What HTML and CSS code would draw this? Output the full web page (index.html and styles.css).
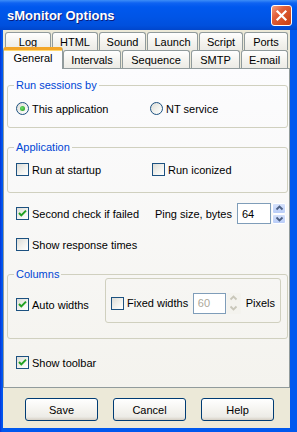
FILE: index.html
```html
<!DOCTYPE html>
<html>
<head>
  <title>sMonitor Options</title>
  <link rel="stylesheet" href="styles.css">
</head>
<body>
<div class="window">
  <div class="titlebar">
    <span class="title">sMonitor Options</span>
    <span class="close">
      <svg width="13" height="13" viewBox="0 0 13 13"><path d="M2.5 2.5 L10.5 10.5 M10.5 2.5 L2.5 10.5" stroke="#fff" stroke-width="2.2" stroke-linecap="square"/></svg>
    </span>
  </div>

  <div class="client">
    <div class="tabs">
      <div class="tabrow back">
        <span class="tab t-log">Log</span>
        <span class="tab t-html">HTML</span>
        <span class="tab t-sound">Sound</span>
        <span class="tab t-launch">Launch</span>
        <span class="tab t-script">Script</span>
        <span class="tab t-ports">Ports</span>
      </div>
      <div class="tabrow front">
        <span class="tab sel t-general">General</span>
        <span class="tab t-intervals">Intervals</span>
        <span class="tab t-sequence">Sequence</span>
        <span class="tab t-smtp">SMTP</span>
        <span class="tab t-email">E-mail</span>
      </div>
    </div>

    <div class="page">
      <fieldset class="group g-run">
        <legend>Run sessions by</legend>
        <div class="row">
          <label class="opt first-run"><span class="radio on"></span>This application</label>
          <label class="opt"><span class="radio"></span>NT service</label>
        </div>
      </fieldset>

      <fieldset class="group g-app">
        <legend>Application</legend>
        <div class="row">
          <label class="opt first-app"><span class="check"></span>Run at startup</label>
          <label class="opt"><span class="check"></span>Run iconized</label>
        </div>
      </fieldset>

      <div class="row ping-row">
        <label class="opt"><span class="check on"><svg width="11" height="11" viewBox="0 0 11 11"><path d="M2 5 L4.3 7.4 L9 2.6" fill="none" stroke="#21A121" stroke-width="2"/></svg></span>Second check if failed</label>
        <span class="ping-label">Ping size, bytes</span>
        <span class="field">64</span>
        <span class="spin">
          <span class="up"><svg width="9" height="6" viewBox="0 0 9 6"><path d="M1.5 4.5 L4.5 1.5 L7.5 4.5" fill="none" stroke="#4D6185" stroke-width="1.8"/></svg></span>
          <span class="down"><svg width="9" height="6" viewBox="0 0 9 6"><path d="M1.5 1.5 L4.5 4.5 L7.5 1.5" fill="none" stroke="#4D6185" stroke-width="1.8"/></svg></span>
        </span>
      </div>

      <label class="opt single resp"><span class="check"></span>Show response times</label>

      <fieldset class="group g-cols">
        <legend>Columns</legend>
        <div class="cols-row">
          <label class="opt auto"><span class="check on"><svg width="11" height="11" viewBox="0 0 11 11"><path d="M2 5 L4.3 7.4 L9 2.6" fill="none" stroke="#21A121" stroke-width="2"/></svg></span>Auto widths</label>
          <div class="subbox">
            <label class="opt fixed"><span class="check"></span>Fixed widths</label>
            <span class="field off">60</span>
            <span class="spin off">
              <span class="up"><svg width="9" height="6" viewBox="0 0 9 6"><path d="M1.5 4.5 L4.5 1.5 L7.5 4.5" fill="none" stroke="#C9C7BA" stroke-width="1.8"/></svg></span>
              <span class="down"><svg width="9" height="6" viewBox="0 0 9 6"><path d="M1.5 1.5 L4.5 4.5 L7.5 1.5" fill="none" stroke="#C9C7BA" stroke-width="1.8"/></svg></span>
            </span>
            <span class="pixels">Pixels</span>
          </div>
        </div>
      </fieldset>

      <label class="opt single toolbar"><span class="check on"><svg width="11" height="11" viewBox="0 0 11 11"><path d="M2 5 L4.3 7.4 L9 2.6" fill="none" stroke="#21A121" stroke-width="2"/></svg></span>Show toolbar</label>
    </div>

    <div class="buttons">
      <button class="btn">Save</button>
      <button class="btn">Cancel</button>
      <button class="btn">Help</button>
    </div>
  </div>
</div>
</body>
</html>
```

FILE: styles.css
```css
* { box-sizing: border-box; }
html, body { margin: 0; padding: 0; }
body { width: 297px; height: 432px; overflow: hidden;
       font: 11px "Liberation Sans", Arial, sans-serif; color: #000; background: #0055E5; }

.window { width: 297px; height: 432px; display: flex; flex-direction: column;
          background: linear-gradient(90deg, #0831D9 0, #0058EE 2px, #0058EE 100%);
          padding: 0 7px 4px 3px; }

/* title bar */
.titlebar { height: 30px; margin: 0 -7px 0 -3px; padding: 0 5px 0 7px;
            display: flex; align-items: center; justify-content: space-between;
            background: linear-gradient(#3D8EF7 0, #0F63F2 3px, #0058EE 7px, #0055E7 55%, #0050DD 85%, #0046CC 100%); }
.title { color: #fff; font-weight: bold; font-size: 13px; text-shadow: 1px 1px #0A1C7A; padding-top: 1px; }
.close { width: 21px; height: 21px; border: 1px solid #fff; border-radius: 3px; margin-top: 1px;
         display: flex; align-items: center; justify-content: center;
         background: linear-gradient(135deg, #F2A183 0, #E2603B 35%, #D04A1E 75%, #C53D15 100%); }
.close svg { display: block; }

/* client area */
.client { flex: 1; display: flex; flex-direction: column; background: #ECE9D8; }

.tabs { padding-top: 2px; height: 38px; }
.tabrow { display: flex; height: 18px; padding-left: 2px; gap: 1px; }
.tab { height: 18px; border: 1px solid #919B9C; border-radius: 3px 3px 0 0;
       background: linear-gradient(#FFFFFF, #F3F2ED 60%, #ECEBE6);
       display: flex; align-items: center; justify-content: center; padding-top: 1px; }
.back .tab { border-bottom: none; height: 18px; }
.front { align-items: flex-end; position: relative; z-index: 2; }
.front .tab { border-bottom: none; }
.tab.sel { height: 22px; margin: 0 -1px -1px -2px; background: #FCFCFE;
           border-top: 3px solid #F3A628; padding-top: 0; padding-bottom: 3px;
           box-shadow: inset 0 1px #FFD770; }

.t-log { width: 46px; }
.t-html { width: 46px; }
.t-sound { width: 47px; }
.t-launch { width: 51px; }
.t-script { width: 44px; }
.t-ports { width: 44px; }
.t-general { width: 60px; }
.t-intervals { width: 58px; }
.t-sequence { width: 68px; }
.t-smtp { width: 49px; }
.t-email { width: 47px; }

/* tab page */
.page { height: 320px; border: 1px solid #919B9C; position: relative; z-index: 1;
        background: linear-gradient(#FCFCFE, #F4F3EE);
        padding: 0 1px 0 3px; display: flex; flex-direction: column; }

.group { margin: 0; padding: 0 0 0 8px; border: 1px solid #D0D0BF; border-radius: 3px; min-width: 0; }
.group legend { padding: 0 2px; margin-left: -2px; color: #0046D5; line-height: 13px; }

.g-run { margin-top: 10px; padding-top: 10px; padding-bottom: 12px; }
.g-app { margin-top: 13px; padding-top: 9px; padding-bottom: 16px; }
.g-cols { margin-top: 17px; padding-bottom: 15px; }

.row { display: flex; align-items: center; }
.opt { display: flex; align-items: center; height: 13px; white-space: nowrap; }
.first-run { width: 134px; }
.first-app { width: 136px; }

.check { width: 13px; height: 13px; border: 1px solid #1C5180; margin-right: 3px; flex: none;
         background: linear-gradient(135deg, #DCDCD7, #F4F4F0 60%, #FFFFFF);
         display: flex; align-items: center; justify-content: center; }
.check svg { display: block; }
.radio { width: 13px; height: 13px; border: 1px solid #1C5180; border-radius: 50%; margin-right: 3px; flex: none;
         background: linear-gradient(135deg, #DCDCD7, #F4F4F0 60%, #FFFFFF);
         display: flex; align-items: center; justify-content: center; }
.radio.on::after { content: ""; width: 5px; height: 5px; border-radius: 50%;
                   background: radial-gradient(circle at 40% 40%, #6FE36B, #2CA02A 80%); }

.ping-row { margin-top: 10px; height: 21px; padding-left: 9px; padding-right: 2px; }
.ping-row .opt { margin-right: auto; }
.ping-label { margin-right: 5px; }

.field { width: 34px; height: 21px; border: 1px solid #7F9DB9; background: #fff;
         display: flex; align-items: center; padding-left: 4px; }
.field.off { background: #FFFFFF; color: #ACA899; }

.spin { width: 14px; height: 21px; display: flex; flex-direction: column; margin-left: 1px; }
.spin span { flex: 1; border: 1px solid #fff; border-radius: 2px;
             background: linear-gradient(#D5E1FB, #B9CDF8);
             display: flex; align-items: center; justify-content: center; }
.spin.off span { background: #F4F3EE; border-color: #F4F3EE; }
.spin svg { display: block; }

.single { margin-left: 9px; }
.resp { margin-top: 14px; }
.toolbar { margin-top: 17px; }

.cols-row { display: flex; align-items: flex-start; margin-top: -3px; }
.auto { margin-top: 20px; margin-right: auto; padding-left: 0; }
.subbox { width: 176px; height: 45px; margin-right: 6px; border: 1px solid #D0D0BF; border-radius: 3px;
          display: flex; align-items: center; padding: 13px 5px 8px 5px; }
.fixed { width: 84px; }
.pixels { margin-left: 5px; }

/* dialog buttons */
.buttons { display: flex; gap: 15px; padding-left: 22px; margin-top: 10px; }
.btn { width: 73px; height: 23px; border: 1px solid #003C74; border-radius: 3px; padding: 0;
       font: 11px "Liberation Sans", Arial, sans-serif; color: #000;
       background: linear-gradient(#FFFFFF, #F5F4F0 50%, #ECEBE6 85%, #D6D0C5); }
```
